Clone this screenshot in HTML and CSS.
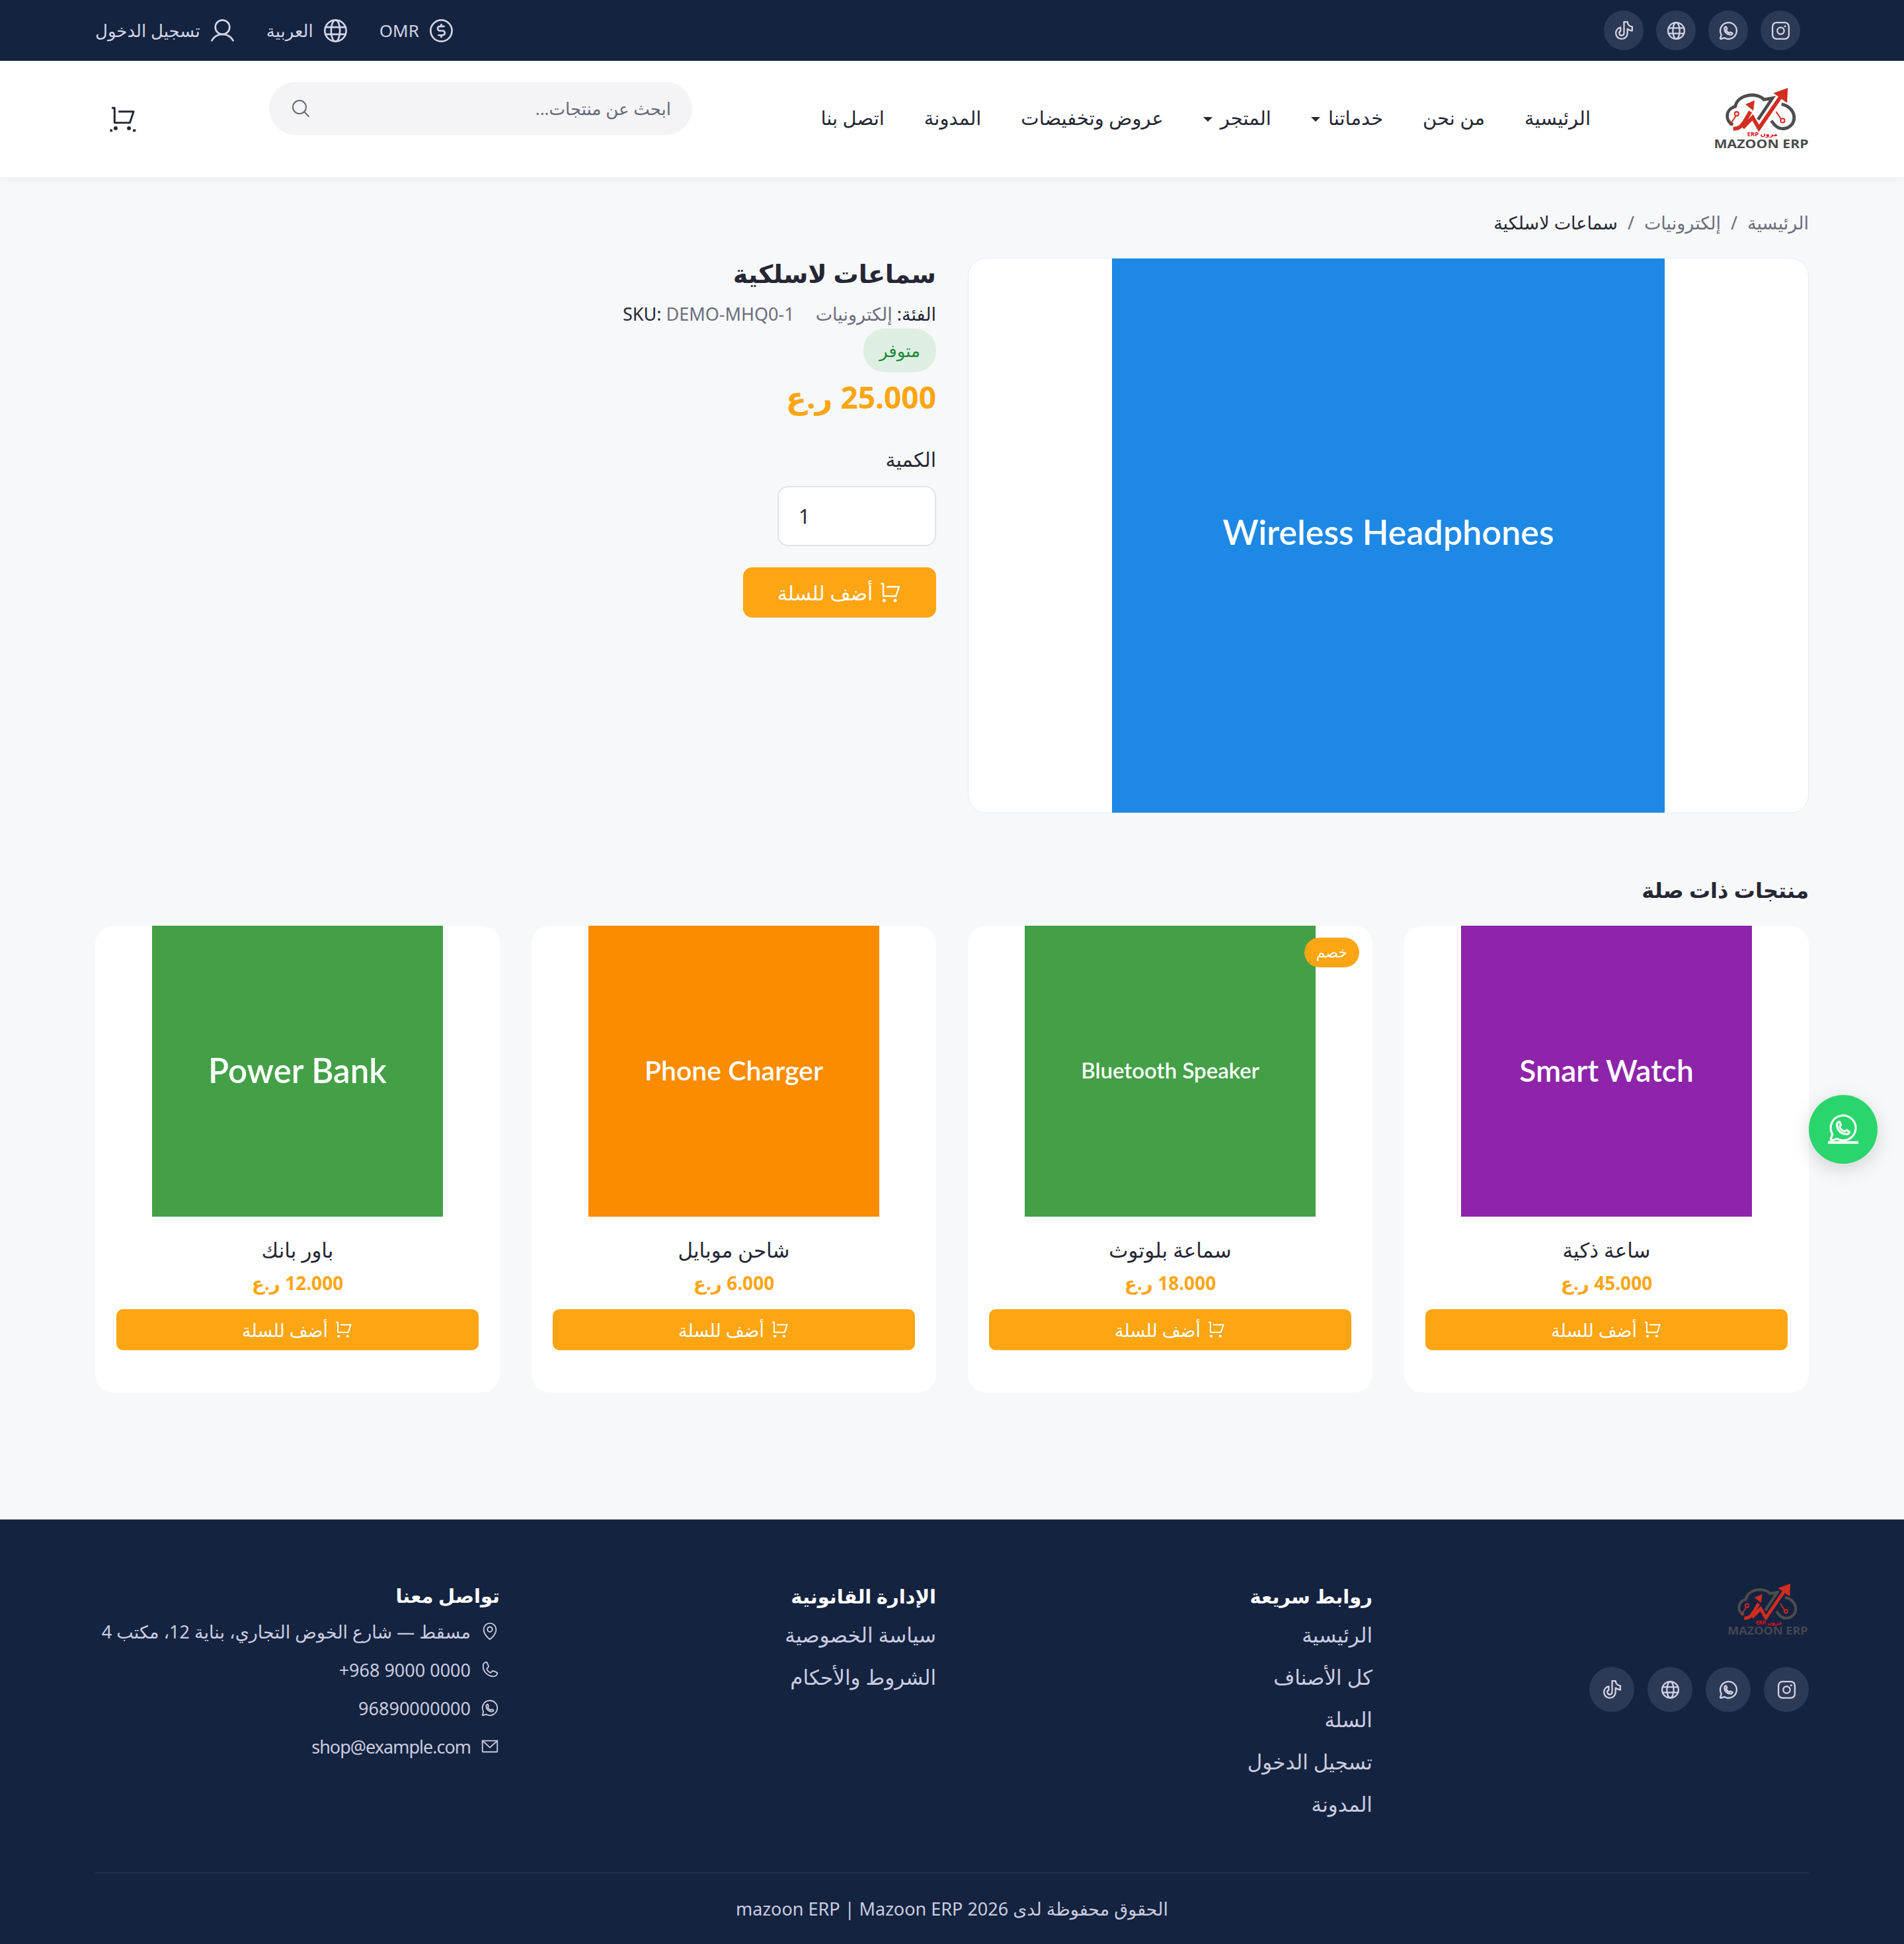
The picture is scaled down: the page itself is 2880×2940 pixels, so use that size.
FILE: index.html
```html
<!DOCTYPE html>
<html lang="ar" dir="rtl">
<head>
  <meta charset="UTF-8">
  <title>سماعات لاسلكية</title>
  <link rel="stylesheet" href="styles.css">
</head>
<body>
<svg class="sprite" xmlns="http://www.w3.org/2000/svg">
  <symbol id="i-instagram" viewBox="0 0 256 256"><circle cx="128" cy="128" r="40"/><rect x="32" y="32" width="192" height="192" rx="48"/><circle class="dot" cx="180" cy="76" r="12"/></symbol>
  <symbol id="i-whatsapp" viewBox="0 0 256 256"><path d="M152.58,145.23l23,11.48A24,24,0,0,1,152,176a72,72,0,0,1-72-72A24,24,0,0,1,99.29,80.46l11.48,23L101,118a56.29,56.29,0,0,0,37,37Z"/><path d="M79.93,211.11a96,96,0,1,0-35-35h0L32.42,213.46a8,8,0,0,0,10.12,10.12l37.39-12.47Z"/></symbol>
  <symbol id="i-whatsapp-bar" viewBox="11 22 234 234"><path d="M152.58,145.23l23,11.48A24,24,0,0,1,152,176a72,72,0,0,1-72-72A24,24,0,0,1,99.29,80.46l11.48,23L101,118a56.29,56.29,0,0,0,37,37Z"/><path d="M79.93,211.11a96,96,0,1,0-35-35h0L32.42,213.46a8,8,0,0,0,10.12,10.12l37.39-12.47Z"/><rect class="dot" x="11" y="230" width="234" height="20"/></symbol>
  <symbol id="i-globe" viewBox="0 0 256 256"><circle cx="128" cy="128" r="96"/><ellipse cx="128" cy="128" rx="40" ry="96"/><line x1="37.5" y1="96" x2="218.5" y2="96"/><line x1="37.5" y1="160" x2="218.5" y2="160"/></symbol>
  <symbol id="i-tiktok" viewBox="0 0 256 256"><path d="M168,106a95.1,95.1,0,0,0,56,22V80a56,56,0,0,1-56-56H128V156a28,28,0,1,1-40-25.31V88c-32,5.71-56,34.43-56,68a68,68,0,0,0,136,0Z"/></symbol>
  <symbol id="i-dollar" viewBox="0 0 256 256"><circle cx="128" cy="128" r="96"/><line x1="128" y1="72" x2="128" y2="88"/><line x1="128" y1="168" x2="128" y2="184"/><path d="M104,168h36a20,20,0,0,0,0-40H116a20,20,0,0,1,0-40h36"/></symbol>
  <symbol id="i-user" viewBox="0 0 256 256"><circle cx="128" cy="96" r="64"/><path d="M32,216c19.37-33.47,54.55-56,96-56s76.63,22.53,96,56"/></symbol>
  <symbol id="i-cart" viewBox="78 60 124 120"><path class="cart-line" d="M87,70H100V138H170L187,87H118"/><circle class="dot" cx="105" cy="163" r="9"/><circle class="dot" cx="166" cy="163" r="9"/></symbol>
  <symbol id="i-cart-head" viewBox="78 64 124 120"><path class="cart-line" d="M87,70H100V138H170L187,87H118"/><circle class="dot" cx="105" cy="163" r="9"/><circle class="dot" cx="166" cy="163" r="9"/><rect class="dot" x="79" y="168" width="11" height="11"/><rect class="dot" x="184" y="168" width="13" height="11"/></symbol>
  <symbol id="i-search" viewBox="0 0 256 256"><circle cx="112" cy="112" r="80"/><line x1="168.57" y1="168.57" x2="224" y2="224"/></symbol>
  <symbol id="i-phone" viewBox="0 0 256 256"><path d="M164.39,145.34a8,8,0,0,1,7.59-.69l47.16,21.13a8,8,0,0,1,4.8,8.3A48.33,48.33,0,0,1,176,216,136,136,0,0,1,40,80,48.33,48.33,0,0,1,81.92,32.06a8,8,0,0,1,8.3,4.8l21.13,47.2a8,8,0,0,1-.66,7.53L89.32,117a7.93,7.93,0,0,0-.54,7.81c8.27,16.93,25.77,34.22,42.75,42.41a7.92,7.92,0,0,0,7.83-.59Z"/></symbol>
  <symbol id="i-pin" viewBox="0 0 256 256"><circle cx="128" cy="104" r="32"/><path d="M208,104c0,72-80,128-80,128S48,176,48,104a80,80,0,0,1,160,0Z"/></symbol>
  <symbol id="i-mail" viewBox="0 0 256 256"><path d="M32,56H224V192a8,8,0,0,1-8,8H40a8,8,0,0,1-8-8V56Z"/><polyline points="224 56 128 144 32 56"/></symbol>
  <symbol id="logo-mark" viewBox="100 45 420 270">
    <g class="logo-cloud">
      <path d="M185,208C150,195 148,140 195,127C205,72 292,62 322,97L360,90L296,186"/>
      <path d="M400,117C462,128 476,200 426,222C400,232 375,222 355,190"/>
    </g>
    <g class="logo-red">
      <path d="M186,226C216,228 226,208 240,188L262,150"/>
      <path d="M228,222L272,176L300,224L396,84"/>
      <path class="thin" d="M197,170L170,210"/>
      <path class="thin" d="M398,183L376,150"/>
      <circle class="thin" cx="201" cy="160" r="9"/>
      <circle class="thin" cx="405" cy="190" r="9"/>
    </g>
    <polygon class="logo-tip" points="364,68 428,45 425,112"/>
    <polygon class="logo-tip" points="240,118 281,100 275,146"/>
    <text class="logo-ar" x="315" y="260" text-anchor="middle">مزون ERP</text>
    <text class="logo-en" x="310" y="311" text-anchor="middle" textLength="420" lengthAdjust="spacingAndGlyphs">MAZOON ERP</text>
  </symbol>
</svg>

<div class="topbar">
  <div class="top-social">
    <a class="social"><svg class="icon"><use href="#i-instagram"/></svg></a>
    <a class="social"><svg class="icon"><use href="#i-whatsapp"/></svg></a>
    <a class="social"><svg class="icon"><use href="#i-globe"/></svg></a>
    <a class="social"><svg class="icon"><use href="#i-tiktok"/></svg></a>
  </div>
  <div class="top-links">
    <a class="top-link"><svg class="icon"><use href="#i-dollar"/></svg>OMR</a>
    <a class="top-link"><svg class="icon"><use href="#i-globe"/></svg>العربية</a>
    <a class="top-link"><svg class="icon"><use href="#i-user"/></svg>تسجيل الدخول</a>
  </div>
</div>

<header class="header">
  <svg class="logo"><use href="#logo-mark"/></svg>
  <nav class="nav">
    <a>الرئيسية</a>
    <a>من نحن</a>
    <a class="has-caret">خدماتنا</a>
    <a class="has-caret">المتجر</a>
    <a>عروض وتخفيضات</a>
    <a>المدونة</a>
    <a>اتصل بنا</a>
  </nav>
  <div class="search">
    <span>ابحث عن منتجات...</span>
    <svg class="icon"><use href="#i-search"/></svg>
  </div>
  <svg class="icon header-cart"><use href="#i-cart-head"/></svg>
</header>

<main class="page">
  <div class="breadcrumb">
    <a>الرئيسية</a><i>/</i><a>إلكترونيات</a><i>/</i><b>سماعات لاسلكية</b>
  </div>

  <section class="product">
    <div class="gallery">
      <div class="ph ph-main">Wireless Headphones</div>
    </div>
    <div class="details">
      <h1>سماعات لاسلكية</h1>
      <div class="meta">
        <span><b>الفئة:</b> إلكترونيات</span>
        <span><b>SKU:</b> DEMO-MHQ0-1</span>
      </div>
      <span class="stock">متوفر</span>
      <div class="price">25.000 ر.ع</div>
      <label class="qty-label" for="qty">الكمية</label>
      <input class="qty" id="qty" type="text" value="1">
      <button class="btn btn-lg"><svg class="icon"><use href="#i-cart"/></svg>أضف للسلة</button>
    </div>
  </section>

  <section class="related">
    <h2>منتجات ذات صلة</h2>
    <div class="cards">
      <article class="card">
        <div class="ph ph-card purple watch">Smart Watch</div>
        <h3>ساعة ذكية</h3>
        <div class="card-price">45.000 ر.ع</div>
        <button class="btn"><svg class="icon"><use href="#i-cart"/></svg>أضف للسلة</button>
      </article>
      <article class="card">
        <span class="sale">خصم</span>
        <div class="ph ph-card green speaker">Bluetooth Speaker</div>
        <h3>سماعة بلوتوث</h3>
        <div class="card-price">18.000 ر.ع</div>
        <button class="btn"><svg class="icon"><use href="#i-cart"/></svg>أضف للسلة</button>
      </article>
      <article class="card">
        <div class="ph ph-card orange charger">Phone Charger</div>
        <h3>شاحن موبايل</h3>
        <div class="card-price">6.000 ر.ع</div>
        <button class="btn"><svg class="icon"><use href="#i-cart"/></svg>أضف للسلة</button>
      </article>
      <article class="card">
        <div class="ph ph-card green bank">Power Bank</div>
        <h3>باور بانك</h3>
        <div class="card-price">12.000 ر.ع</div>
        <button class="btn"><svg class="icon"><use href="#i-cart"/></svg>أضف للسلة</button>
      </article>
    </div>
  </section>
</main>

<footer class="footer">
  <div class="footer-cols">
    <div class="footer-brand">
      <svg class="logo logo-footer"><use href="#logo-mark"/></svg>
      <div class="footer-social">
        <a class="social"><svg class="icon"><use href="#i-instagram"/></svg></a>
        <a class="social"><svg class="icon"><use href="#i-whatsapp"/></svg></a>
        <a class="social"><svg class="icon"><use href="#i-globe"/></svg></a>
        <a class="social"><svg class="icon"><use href="#i-tiktok"/></svg></a>
      </div>
    </div>
    <div class="footer-col">
      <h4>روابط سريعة</h4>
      <a>الرئيسية</a>
      <a>كل الأصناف</a>
      <a>السلة</a>
      <a>تسجيل الدخول</a>
      <a>المدونة</a>
    </div>
    <div class="footer-col">
      <h4>الإدارة القانونية</h4>
      <a>سياسة الخصوصية</a>
      <a>الشروط والأحكام</a>
    </div>
    <div class="footer-col contact">
      <h4>تواصل معنا</h4>
      <div class="contact-row"><svg class="icon"><use href="#i-pin"/></svg>مسقط — شارع الخوض التجاري، بناية 12، مكتب 4</div>
      <div class="contact-row"><svg class="icon"><use href="#i-phone"/></svg><span dir="ltr">+968 9000 0000</span></div>
      <div class="contact-row"><svg class="icon"><use href="#i-whatsapp"/></svg>96890000000</div>
      <div class="contact-row"><svg class="icon"><use href="#i-mail"/></svg><span class="mail">shop@example.com</span></div>
    </div>
  </div>
  <div class="copyright">الحقوق محفوظة لدى mazoon ERP | Mazoon ERP 2026</div>
</footer>

<a class="wa-float"><svg class="icon"><use href="#i-whatsapp-bar"/></svg></a>
</body>
</html>
```

FILE: styles.css
```css
* {
  box-sizing: border-box;
}

body {
  position: relative;
  margin: 0;
  font-family: "Noto Sans", "DejaVu Sans", sans-serif;
  font-size: 28px;
  color: #252733;
  background-color: #f7f8fa;
}

.sprite {
  display: none;
}

.icon {
  width: 28px;
  height: 28px;
  flex: none;
  fill: none;
  stroke: currentColor;
  stroke-width: 16;
  stroke-linecap: round;
  stroke-linejoin: round;
}

.dot {
  fill: currentColor;
  stroke: none;
}

.cart-line {
  stroke-width: 9;
  stroke-linecap: butt;
  stroke-linejoin: round;
}

/* top bar */
.topbar {
  display: flex;
  justify-content: space-between;
  align-items: center;
  height: 92px;
  padding: 0 157px 0 144px;
  background-color: #14233f;
  color: #d2d4e6;
}

.top-social {
  display: flex;
  gap: 19px;
}

.social {
  display: flex;
  align-items: center;
  justify-content: center;
  width: 60px;
  height: 60px;
  border-radius: 50%;
  background-color: #2d3a56;
  color: #d2d4e6;
}

.social .icon {
  width: 33px;
  height: 33px;
  stroke-width: 18;
}

.top-links {
  display: flex;
  gap: 45px;
}

.top-link {
  display: flex;
  align-items: center;
  gap: 12px;
  font-size: 26px;
}

.top-link .icon {
  width: 43px;
  height: 43px;
}

/* header */
.header {
  display: flex;
  align-items: center;
  height: 176px;
  padding: 0 144px 0 166px;
  background-color: #fff;
  box-shadow: 0 2px 12px rgba(0, 0, 0, 0.06);
}

.logo {
  width: 144px;
  height: 92px;
  margin-top: -2px;
  flex: none;
  color: #4a4a4a;
}

.logo-cloud path {
  fill: none;
  stroke: #4d4d4d;
  stroke-width: 14;
}

.logo-red path,
.logo-red circle {
  fill: none;
  stroke: #d32c20;
  stroke-width: 17;
}

.logo-red .thin {
  stroke-width: 6;
}

.logo-tip {
  fill: #d32c20;
}

.logo-ar {
  font-size: 28px;
  font-weight: 700;
  fill: #e0101f;
  stroke: none;
}

.logo-en {
  font-family: "Open Sans", sans-serif;
  font-size: 54px;
  font-weight: 700;
  fill: currentColor;
  stroke: none;
}

.nav {
  display: flex;
  gap: 60px;
  margin-top: -6px;
  margin-right: 186px;
  font-size: 29px;
}

.has-caret::after {
  content: "";
  display: inline-block;
  margin-right: 12px;
  vertical-align: middle;
  border-top: 7px solid #252733;
  border-left: 7px solid transparent;
  border-right: 7px solid transparent;
}

.search {
  display: flex;
  justify-content: space-between;
  align-items: center;
  width: 640px;
  height: 80px;
  margin-right: auto;
  margin-top: -32px;
  padding: 0 32px;
  border-radius: 40px;
  background-color: #f4f4f6;
  color: #666977;
  font-size: 26px;
}

.search .icon {
  width: 32px;
  height: 32px;
}

.header-cart {
  width: 41px;
  height: 40px;
  margin-top: 2px;
  margin-right: 200px;
  color: #252733;
}

/* product */
.page {
  padding: 0 144px;
}

.breadcrumb {
  display: flex;
  align-items: center;
  gap: 15px;
  height: 60px;
  margin-top: 38px;
  color: #6c6e7b;
  font-size: 27px;
}

.breadcrumb b {
  font-weight: 400;
  color: #252733;
}

.breadcrumb i {
  font-style: normal;
}

.product {
  display: grid;
  grid-template-columns: 1fr 1fr;
  gap: 48px;
  margin-top: 24px;
}

.gallery {
  display: flex;
  justify-content: center;
  height: 840px;
  overflow: hidden;
  border: 1px solid #e8eaee;
  border-radius: 28px;
  background-color: #fff;
}

.ph {
  display: flex;
  align-items: center;
  justify-content: center;
  font-family: Lato, sans-serif;
  font-weight: 600;
  color: #fff;
}

.ph-main {
  width: 836px;
  padding-bottom: 12px;
  background-color: #1e88e5;
  font-size: 52px;
}

.details {
  display: flex;
  flex-direction: column;
  align-items: flex-start;
  padding-top: 2px;
}

.details h1 {
  margin: 0;
  font-size: 38px;
  line-height: 42px;
  font-weight: 700;
}

.meta {
  display: flex;
  gap: 32px;
  margin-top: 22px;
  color: #6c6e7b;
  font-size: 27px;
}

.meta b {
  font-weight: 400;
  color: #252733;
}

.stock {
  margin-top: 4px;
  padding: 15px 24px;
  border-radius: 32px;
  background-color: #deeee3;
  color: #1b8a36;
  font-size: 26px;
}

.price {
  margin-top: 6px;
  color: #fda513;
  font-size: 46px;
  font-weight: 700;
}

.qty-label {
  margin-top: 43px;
  font-size: 30px;
}

.qty {
  width: 240px;
  height: 91px;
  margin-top: 20px;
  padding: 0 30px;
  border: 2px solid #e0e3e8;
  border-radius: 16px;
  background-color: #fff;
  color: #252733;
  font-family: inherit;
  font-size: 30px;
  text-align: left;
}

.btn {
  display: flex;
  align-items: center;
  justify-content: center;
  gap: 10px;
  height: 62px;
  border: none;
  border-radius: 10px;
  background-color: #fda513;
  color: #fff;
  font-family: inherit;
  font-size: 27px;
}

.btn-lg {
  width: 292px;
  height: 76px;
  margin-top: 32px;
  border-radius: 14px;
  font-size: 30px;
}

.btn-lg .icon {
  width: 34px;
  height: 33px;
}

/* related */
.related {
  margin-top: 88px;
}

.related h2 {
  margin: 0;
  font-size: 32px;
  line-height: 56px;
  font-weight: 700;
}

.cards {
  display: grid;
  grid-template-columns: repeat(4, 1fr);
  gap: 48px;
  margin-top: 26px;
}

.card {
  position: relative;
  height: 706px;
  padding: 0 32px;
  border-radius: 28px;
  background-color: #fff;
  text-align: center;
}

.card .btn {
  width: 100%;
  margin-top: 20px;
}

.ph-card {
  width: 440px;
  height: 440px;
  margin: 0 auto;
  padding-bottom: 4px;
}

.purple {
  background-color: #8e24aa;
}

.green {
  background-color: #43a047;
}

.orange {
  background-color: #fb8c00;
}

.watch {
  font-size: 46px;
}

.bank {
  font-size: 51px;
}

.charger {
  font-size: 41px;
}

.speaker {
  font-size: 33px;
}

.card h3 {
  margin: 28px 0 0;
  font-size: 31px;
  line-height: 44px;
  font-weight: 400;
}

.card-price {
  margin-top: 8px;
  color: #fda513;
  font-size: 28px;
  line-height: 40px;
  font-weight: 700;
}

.sale {
  position: absolute;
  top: 18px;
  right: 20px;
  height: 45px;
  padding: 0 18px;
  border-radius: 24px;
  background-color: #fda513;
  color: #fff;
  font-size: 22px;
  line-height: 43px;
}

/* footer */
.footer {
  height: 642px;
  margin-top: 192px;
  padding: 0 144px;
  background-color: #14233f;
  color: #c9cce0;
}

.footer-cols {
  display: grid;
  grid-template-columns: repeat(4, 1fr);
  gap: 48px;
  height: 535px;
  padding-top: 90px;
  border-bottom: 1px solid rgba(255, 255, 255, 0.12);
}

.footer-brand .logo-footer {
  display: block;
  width: 124px;
  height: 78px;
  margin-top: 7px;
  color: #44474f;
}

.footer-social {
  display: flex;
  gap: 20px;
  margin-top: 48px;
}

.footer-social .social {
  width: 68px;
  height: 68px;
}

.footer-col {
  display: flex;
  flex-direction: column;
  align-items: flex-start;
  font-size: 31px;
}

.footer-col h4 {
  margin: 0;
  color: #fff;
  font-size: 29px;
  line-height: 52px;
  font-weight: 700;
}

.contact h4 {
  line-height: 50px;
}

.footer-col a {
  height: 64px;
  line-height: 64px;
}

.contact-row {
  display: flex;
  align-items: center;
  gap: 14px;
  height: 58px;
  font-size: 27px;
}

.contact-row .icon {
  width: 30px;
  height: 30px;
}

.mail {
  letter-spacing: -1px;
}

.copyright {
  padding-top: 35px;
  text-align: center;
  font-size: 27px;
}

.wa-float {
  position: absolute;
  top: 1656px;
  left: 2736px;
  display: flex;
  align-items: center;
  justify-content: center;
  width: 104px;
  height: 104px;
  border-radius: 50%;
  background-color: #2ad66c;
  color: #fff;
  box-shadow: 0 8px 30px rgba(0, 0, 0, 0.15);
}

.wa-float .icon {
  width: 46px;
  height: 46px;
}
```
